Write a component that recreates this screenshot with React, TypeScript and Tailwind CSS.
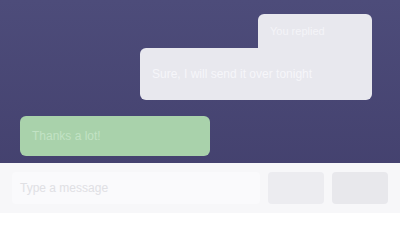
export default function App() {
  return (
    <div
      className="w-[400px] h-[213px] flex flex-col bg-gradient-to-b from-[#4d4c7a] to-[#423f6c] overflow-hidden"
      style={{ fontFamily: '"Liberation Sans", Arial, sans-serif' }}
    >
      <div className="flex-1 flex flex-col px-5 pt-[14px]">
        <div className="flex flex-col items-end mr-[8px]">
          <div className="w-[114px] h-[34px] bg-[#e8e8ee] rounded-t-md flex items-center px-3">
            <span className="text-[11px] text-[#f4f4f8]">You replied</span>
          </div>
          <div className="w-[232px] h-[52px] bg-[#e8e8ee] rounded-b-md rounded-tl-md flex items-center px-3">
            <span className="text-[12px] text-[#f6f6fa]">
              Sure, I will send it over tonight
            </span>
          </div>
        </div>
        <div className="mt-[16px] w-[190px] h-[40px] bg-[#a9d2ab] rounded-md flex items-center px-3">
          <span className="text-[12px] text-[#c2e2c4]">Thanks a lot!</span>
        </div>
      </div>
      <div className="h-[50px] bg-[#f7f7f9] flex items-center gap-2 px-3">
        <div className="flex-1 h-[32px] bg-[#fafafc] rounded flex items-center px-2">
          <span className="text-[12px] text-[#e0e0e4]">Type a message</span>
        </div>
        <div className="w-[56px] h-[32px] bg-[#ececf0] rounded" />
        <div className="w-[56px] h-[32px] bg-[#e8e8ec] rounded" />
      </div>
    </div>
  );
}
